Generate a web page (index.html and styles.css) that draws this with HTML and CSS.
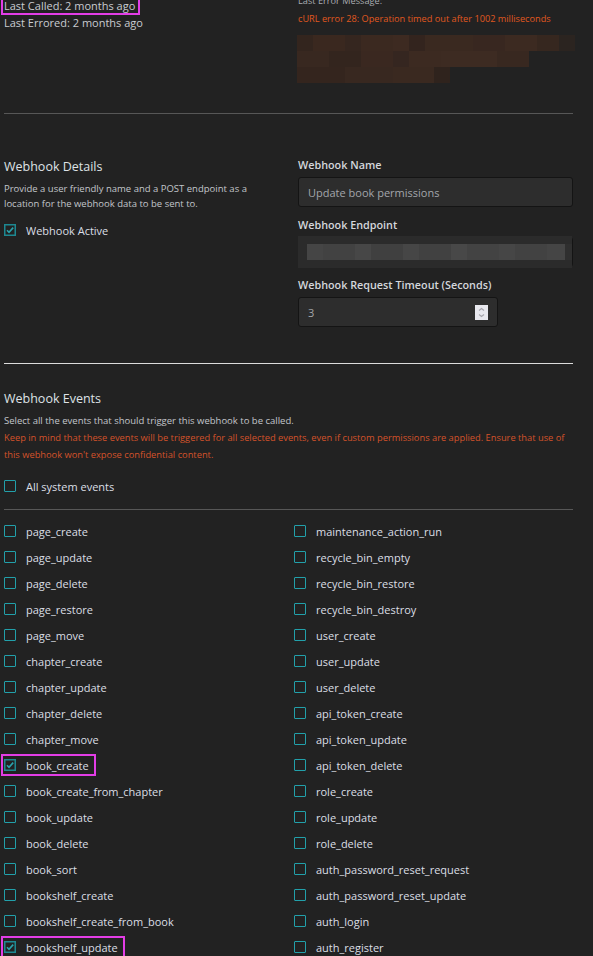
FILE: index.html
```html
<!DOCTYPE html>
<html lang="en">
<head>
<meta charset="utf-8">
<title>Webhook</title>
<link rel="stylesheet" href="styles.css">
</head>
<body>
<div class="page">
  <section class="status">
    <div class="status-left">
      <div class="line"><span class="hl-top">Last Called: 2 months ago</span></div>
      <div class="line">Last Errored: 2 months ago</div>
    </div>
    <div class="status-right">
      <div class="line muted">Last Error Message:</div>
      <div class="line err">cURL error 28: Operation timed out after 1002 milliseconds</div>
      <div class="mosaic">
        <div class="m-row m1"></div>
        <div class="m-row m2"></div>
        <div class="m-row m3"></div>
      </div>
    </div>
  </section>

  <hr class="div div-dim div-first">

  <section class="details">
    <div class="details-left">
      <h2 class="heading">Webhook Details</h2>
      <p class="desc">Provide a user friendly name and a POST endpoint as a<br>location for the webhook data to be sent to.</p>
      <div class="active-row">
        <label class="cb">
          <svg class="box" width="12" height="12" viewBox="0 0 12 12"><rect x="0.75" y="0.75" width="10.5" height="10.5" fill="#222" stroke="#1d8891" stroke-width="1.5"/><polyline points="3,6.3 5,8.3 9.2,3.6" fill="none" stroke="#2aa3ad" stroke-width="1.6"/></svg>
          <span class="cb-label">Webhook Active</span>
        </label>
      </div>
    </div>
    <div class="details-right">
      <div class="field">
        <div class="field-label">Webhook Name</div>
        <div class="input">Update book permissions</div>
      </div>
      <div class="field">
        <div class="field-label">Webhook Endpoint</div>
        <div class="input input-blur"><div class="gray-mosaic"></div></div>
      </div>
      <div class="field">
        <div class="field-label">Webhook Request Timeout (Seconds)</div>
        <div class="input input-num">3
          <span class="spinner">
            <svg width="13" height="15" viewBox="0 0 13 15"><rect width="13" height="15" fill="#e8e8ee"/><polyline points="4,5.5 6.5,3.5 9,5.5" fill="none" stroke="#a6a6ad" stroke-width="1.2"/><polyline points="4,9.5 6.5,11.5 9,9.5" fill="none" stroke="#a6a6ad" stroke-width="1.2"/></svg>
          </span>
        </div>
      </div>
    </div>
  </section>

  <hr class="div div-bright">

  <section class="events">
    <h2 class="heading">Webhook Events</h2>
    <p class="small">Select all the events that should trigger this webhook to be called.</p>
    <p class="warn"><span>Keep in mind that these events will be triggered for all selected events, even if custom permissions are applied. Ensure that use of</span><span>this webhook won't expose confidential content.</span></p>
    <div class="all-row">
      <label class="cb"><span class="box-empty"></span><span class="cb-label">All system events</span></label>
    </div>
    <hr class="div div-dim div-events">
    <div class="grid">
      <div class="row"><label class="cb"><span class="box-empty"></span><span class="cb-label">page_create</span></label></div>
      <div class="row"><label class="cb"><span class="box-empty"></span><span class="cb-label">maintenance_action_run</span></label></div>
      <div class="row"><label class="cb"><span class="box-empty"></span><span class="cb-label">page_update</span></label></div>
      <div class="row"><label class="cb"><span class="box-empty"></span><span class="cb-label">recycle_bin_empty</span></label></div>
      <div class="row"><label class="cb"><span class="box-empty"></span><span class="cb-label">page_delete</span></label></div>
      <div class="row"><label class="cb"><span class="box-empty"></span><span class="cb-label">recycle_bin_restore</span></label></div>
      <div class="row"><label class="cb"><span class="box-empty"></span><span class="cb-label">page_restore</span></label></div>
      <div class="row"><label class="cb"><span class="box-empty"></span><span class="cb-label">recycle_bin_destroy</span></label></div>
      <div class="row"><label class="cb"><span class="box-empty"></span><span class="cb-label">page_move</span></label></div>
      <div class="row"><label class="cb"><span class="box-empty"></span><span class="cb-label">user_create</span></label></div>
      <div class="row"><label class="cb"><span class="box-empty"></span><span class="cb-label">chapter_create</span></label></div>
      <div class="row"><label class="cb"><span class="box-empty"></span><span class="cb-label">user_update</span></label></div>
      <div class="row"><label class="cb"><span class="box-empty"></span><span class="cb-label">chapter_update</span></label></div>
      <div class="row"><label class="cb"><span class="box-empty"></span><span class="cb-label">user_delete</span></label></div>
      <div class="row"><label class="cb"><span class="box-empty"></span><span class="cb-label">chapter_delete</span></label></div>
      <div class="row"><label class="cb"><span class="box-empty"></span><span class="cb-label">api_token_create</span></label></div>
      <div class="row"><label class="cb"><span class="box-empty"></span><span class="cb-label">chapter_move</span></label></div>
      <div class="row"><label class="cb"><span class="box-empty"></span><span class="cb-label">api_token_update</span></label></div>
      <div class="row"><label class="cb hl"><svg class="box" width="12" height="12" viewBox="0 0 12 12"><rect x="0.75" y="0.75" width="10.5" height="10.5" fill="#222" stroke="#1d8891" stroke-width="1.5"/><polyline points="3,6.3 5,8.3 9.2,3.6" fill="none" stroke="#2aa3ad" stroke-width="1.6"/></svg><span class="cb-label">book_create</span></label></div>
      <div class="row"><label class="cb"><span class="box-empty"></span><span class="cb-label">api_token_delete</span></label></div>
      <div class="row"><label class="cb"><span class="box-empty"></span><span class="cb-label">book_create_from_chapter</span></label></div>
      <div class="row"><label class="cb"><span class="box-empty"></span><span class="cb-label">role_create</span></label></div>
      <div class="row"><label class="cb"><span class="box-empty"></span><span class="cb-label">book_update</span></label></div>
      <div class="row"><label class="cb"><span class="box-empty"></span><span class="cb-label">role_update</span></label></div>
      <div class="row"><label class="cb"><span class="box-empty"></span><span class="cb-label">book_delete</span></label></div>
      <div class="row"><label class="cb"><span class="box-empty"></span><span class="cb-label">role_delete</span></label></div>
      <div class="row"><label class="cb"><span class="box-empty"></span><span class="cb-label">book_sort</span></label></div>
      <div class="row"><label class="cb"><span class="box-empty"></span><span class="cb-label">auth_password_reset_request</span></label></div>
      <div class="row"><label class="cb"><span class="box-empty"></span><span class="cb-label">bookshelf_create</span></label></div>
      <div class="row"><label class="cb"><span class="box-empty"></span><span class="cb-label">auth_password_reset_update</span></label></div>
      <div class="row"><label class="cb"><span class="box-empty"></span><span class="cb-label">bookshelf_create_from_book</span></label></div>
      <div class="row"><label class="cb"><span class="box-empty"></span><span class="cb-label">auth_login</span></label></div>
      <div class="row"><label class="cb hl"><svg class="box" width="12" height="12" viewBox="0 0 12 12"><rect x="0.75" y="0.75" width="10.5" height="10.5" fill="#222" stroke="#1d8891" stroke-width="1.5"/><polyline points="3,6.3 5,8.3 9.2,3.6" fill="none" stroke="#2aa3ad" stroke-width="1.6"/></svg><span class="cb-label">bookshelf_update</span></label></div>
      <div class="row"><label class="cb"><span class="box-empty"></span><span class="cb-label">auth_register</span></label></div>
    </div>
  </section>
</div>
</body>
</html>
```

FILE: styles.css
```css
html, body {
  margin: 0;
  padding: 0;
  background: #222222;
  overflow: hidden;
}
body {
  font-family: "Open Sans", "Noto Sans", sans-serif;
  color: #d6d9de;
  font-size: 11px;
}
.page {
  width: 569px;
  padding-left: 4px;
  margin-top: -3px;
}
.status {
  display: flex;
}
.status-left {
  flex: none;
  width: 294px;
}
.status-left .line {
  line-height: 17px;
  height: 17px;
  color: #c9ccd1;
}
.hl-top {
  display: inline-block;
  line-height: 13px;
  padding-right: 2px;
  outline: 2px solid #e33de6;
  outline-offset: 1px;
}
.status-right {
  flex: 1;
  min-width: 0;
  margin-top: -5px;
}
.status-right .line {
  line-height: 18px;
  height: 18px;
  font-size: 9.2px;
  white-space: nowrap;
}
.muted {
  color: #a9acb1;
}
.err {
  color: #e0581f;
}
.mosaic {
  margin-top: 7px;
  margin-left: -1px;
}
.m-row {
  height: 16px;
}
.m1 {
  width: 278px;
  background: linear-gradient(90deg, #33251e 0 16px, #3a281f 16px 48px, #35261f 48px 64px, #3b2920 64px 96px, #3d2a21 96px 112px, #33241e 112px 128px, #3a2920 128px 176px, #382720 176px 208px, #3c2a21 208px 240px, #36271f 240px 262px, #2b2420 262px 278px);
}
.m2 {
  width: 232px;
  background: linear-gradient(90deg, #382820 0 32px, #33251e 32px 64px, #3a2820 64px 96px, #352620 96px 112px, #3c2a21 112px 144px, #3d2b22 144px 200px, #382820 200px 232px);
}
.m3 {
  width: 153px;
  background: linear-gradient(90deg, #34251e 0 48px, #382820 48px 96px, #3a2920 96px 137px, #2f231d 137px 153px);
}
.div {
  border: 0;
  height: 1px;
  margin: 0;
  width: 569px;
}
.div-dim {
  background: #575757;
}
.div-bright {
  background: #dcdcdc;
  margin-top: 36px;
}
.div-first {
  margin-top: 30px;
}
.details {
  display: flex;
}
.details-left {
  flex: none;
  width: 294px;
  padding-top: 43px;
}
.details-right {
  flex: 1;
  min-width: 0;
  padding-top: 42px;
}
.heading {
  margin: 0;
  font-size: 12.5px;
  font-weight: 400;
  line-height: 20px;
  height: 20px;
  color: #dfe2e6;
}
.desc {
  margin: 4px 0 0;
  font-size: 9.5px;
  line-height: 15px;
  color: #c3c6cb;
}
.active-row {
  margin-top: 9px;
  height: 20px;
  display: flex;
  align-items: center;
}
.cb {
  display: inline-flex;
  align-items: center;
  height: 16px;
}
.box, .box-empty {
  flex: none;
  width: 12px;
  height: 12px;
  display: block;
}
.box-empty {
  box-sizing: border-box;
  border: 1.5px solid #22a0aa;
  border-radius: 1px;
}
.cb-label {
  margin-left: 10px;
  font-size: 11px;
  color: #dbdfe5;
}
.hl {
  outline: 2px solid #e33de6;
  outline-offset: 1px;
  padding-right: 4px;
}
.field + .field {
  margin-top: 9px;
}
.field-label {
  font-weight: 600;
  font-size: 10.8px;
  line-height: 18px;
  height: 18px;
  color: #d4d7dc;
  margin-bottom: 3px;
}
.input {
  box-sizing: border-box;
  height: 30px;
  border: 1px solid #141414;
  border-radius: 3px;
  background: #2d2d2d;
  display: flex;
  align-items: center;
  padding-left: 9px;
  color: #a3a6ab;
  font-size: 11px;
}
.input-blur {
  padding-left: 0;
}
.gray-mosaic {
  height: 32px;
  width: 279px;
  margin-left: -1px;
  background: linear-gradient(180deg, #2b2b2b 0 8px, transparent 8px 24px, #2b2b2b 24px 32px),
    linear-gradient(90deg, #2b2b2b 0 9px, #454545 9px 25px, #424242 25px 57px, #474747 57px 73px, #404040 73px 105px, #464646 105px 121px, #414141 121px 153px, #484848 153px 169px, #434343 169px 201px, #464646 201px 217px, #424242 217px 249px, #454545 249px 267px, #2f2f2f 267px 279px);
}
.input-num {
  width: 200px;
  justify-content: space-between;
  padding-right: 9px;
}
.spinner {
  display: block;
  height: 15px;
}
.spinner svg {
  display: block;
}
.events {
  padding-top: 25px;
}
.small {
  margin: 4px 0 0;
  font-size: 9.5px;
  line-height: 15px;
  color: #c3c6cb;
}
.warn {
  margin: 1px 0 0;
  font-size: 9.3px;
  line-height: 17px;
  color: #d4522a;
}
.warn span {
  display: block;
  white-space: nowrap;
}
.all-row {
  margin-top: 13px;
  height: 20px;
  display: flex;
  align-items: center;
}
.div-events {
  margin-top: 13px;
}
.grid {
  margin-top: 8px;
  display: grid;
  grid-template-columns: 290px 279px;
  grid-auto-rows: 26px;
}
.row {
  display: flex;
  align-items: center;
}
```
